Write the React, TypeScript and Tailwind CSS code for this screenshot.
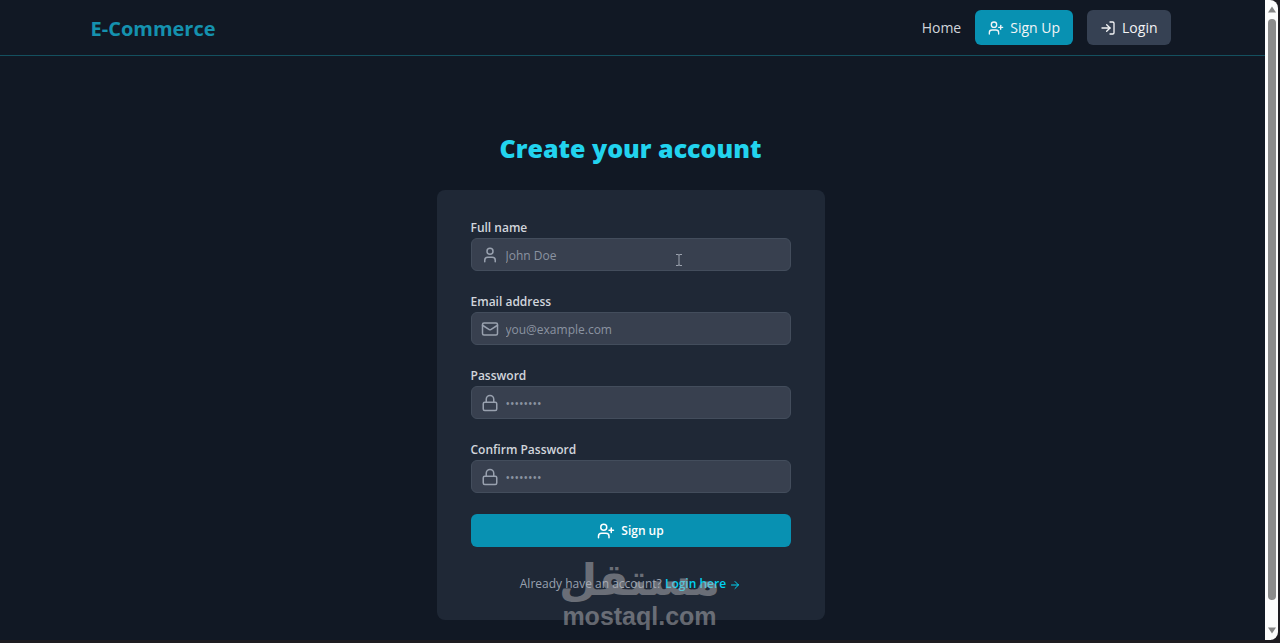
import { ArrowRight, Lock, LogIn, Mail, User, UserPlus } from 'lucide-react';
import type { LucideIcon } from 'lucide-react';
import { useState } from 'react';
import type { FormEvent } from 'react';

interface Field {
  id: 'name' | 'email' | 'password' | 'confirmPassword';
  label: string;
  type: string;
  placeholder: string;
  icon: LucideIcon;
}

const fields: Field[] = [
  { id: 'name', label: 'Full name', type: 'text', placeholder: 'John Doe', icon: User },
  { id: 'email', label: 'Email address', type: 'email', placeholder: 'you@example.com', icon: Mail },
  { id: 'password', label: 'Password', type: 'password', placeholder: '••••••••', icon: Lock },
  { id: 'confirmPassword', label: 'Confirm Password', type: 'password', placeholder: '••••••••', icon: Lock },
];

function Navbar() {
  return (
    <header className="border-b border-[#14505f] py-2.5 pr-5 pl-4">
      <div className="mx-auto flex max-w-[1080px] items-center justify-between">
        <a href="#" className="pt-0.5 text-xl leading-7 font-bold text-[#1591ae]">
          E-Commerce
        </a>
        <nav className="flex items-center gap-3.5 text-sm">
          <a href="#" className="text-gray-300">
            Home
          </a>
          <a
            href="#signup"
            className="flex h-[35px] items-center gap-1.5 rounded-md bg-[#0891b2] px-[13px] text-gray-100"
          >
            <UserPlus className="size-4" />
            Sign Up
          </a>
          <a
            href="#login"
            className="flex h-[35px] items-center gap-1.5 rounded-md bg-gray-700 px-[13px] text-gray-100"
          >
            <LogIn className="size-4" />
            Login
          </a>
        </nav>
      </div>
    </header>
  );
}

function SignUpForm() {
  const [formData, setFormData] = useState({
    name: '',
    email: '',
    password: '',
    confirmPassword: '',
  });

  const handleSubmit = (e: FormEvent) => {
    e.preventDefault();
  };

  return (
    <div className="relative mt-[26px] w-full max-w-[388px] rounded-lg bg-[#1f2836] px-[34px] py-7">
      <form onSubmit={handleSubmit} className="space-y-[21px]">
        {fields.map((field) => (
          <div key={field.id}>
            <label
              htmlFor={field.id}
              className="block text-xs leading-[19px] font-semibold text-gray-300"
            >
              {field.label}
            </label>
            <div className="relative mt-px">
              <field.icon className="pointer-events-none absolute top-2 left-[10px] size-[18px] text-gray-400" />
              <input
                id={field.id}
                type={field.type}
                placeholder={field.placeholder}
                value={formData[field.id]}
                onChange={(e) => setFormData({ ...formData, [field.id]: e.target.value })}
                className="block h-[33px] w-full rounded-md border border-[#434d5c] bg-[#38404f] pt-0.5 pr-3 pl-[34px] text-xs text-gray-100 placeholder:text-[#8b93a1]"
              />
              {field.id === 'name' && <TextCursor />}
            </div>
          </div>
        ))}
        <button
          type="submit"
          className="flex h-[33px] w-full items-center justify-center gap-1.5 rounded-md bg-[#0891b2] text-xs font-semibold text-white"
        >
          <UserPlus className="size-[18px]" />
          Sign up
        </button>
      </form>

      <p className="mt-7 text-center text-xs leading-[17px] text-gray-400">
        Already have an account?{' '}
        <a href="#login" className="font-semibold text-cyan-400">
          Login here <ArrowRight className="inline size-3" />
        </a>
      </p>

      <Watermark />
    </div>
  );
}

function TextCursor() {
  return (
    <svg
      viewBox="0 0 8 14"
      className="pointer-events-none absolute top-[15px] left-[204px] h-3.5 w-2"
      fill="none"
      stroke="#9ca3af"
    >
      <path d="M1 1.5h2.2q.8 0 .8.8q0-.8.8-.8H7M4 2v10M1 12.5h2.2q.8 0 .8-.8q0 .8.8.8H7" />
    </svg>
  );
}

function Watermark() {
  return (
    <div className="pointer-events-none absolute inset-x-0 -bottom-2 flex flex-col items-center pl-[18px] font-bold text-[#b4b4b8] opacity-50">
      <span dir="rtl" lang="ar" className="font-['DejaVu_Sans'] text-[44px] leading-[48px]">
        مستقل
      </span>
      <span className="font-['Liberation_Sans'] text-[25px] leading-6">mostaql.com</span>
    </div>
  );
}

function Scrollbar() {
  return (
    <div aria-hidden="true" className="mr-0.5 flex w-[13px] flex-col items-center rounded-r-lg bg-[#fcfcfc] py-1.5">
      <svg viewBox="0 0 8 7" className="h-[7px] w-2" fill="#858585">
        <path d="M4 0.5L8 6.5H0Z" />
      </svg>
      <div className="mt-1.5 mb-[27px] w-2 flex-1 rounded-full bg-[#8b8b8b]" />
      <svg viewBox="0 0 8 7" className="h-[7px] w-2" fill="#858585">
        <path d="M0 0.5H8L4 6.5Z" />
      </svg>
    </div>
  );
}

export default function App() {
  return (
    <div className="flex min-h-screen flex-col bg-[#1e1c21] font-['Open_Sans',sans-serif]">
      <div className="flex flex-1">
        <div className="flex flex-1 flex-col bg-[#111824]">
          <Navbar />
          <main className="flex flex-col items-center pt-[76px] pr-5 pb-5 pl-4">
            <h1 className="text-[25px] leading-8 font-extrabold text-[#22d3ee]">Create your account</h1>
            <SignUpForm />
          </main>
        </div>
        <Scrollbar />
      </div>
      <div className="h-[3px]" />
    </div>
  );
}
